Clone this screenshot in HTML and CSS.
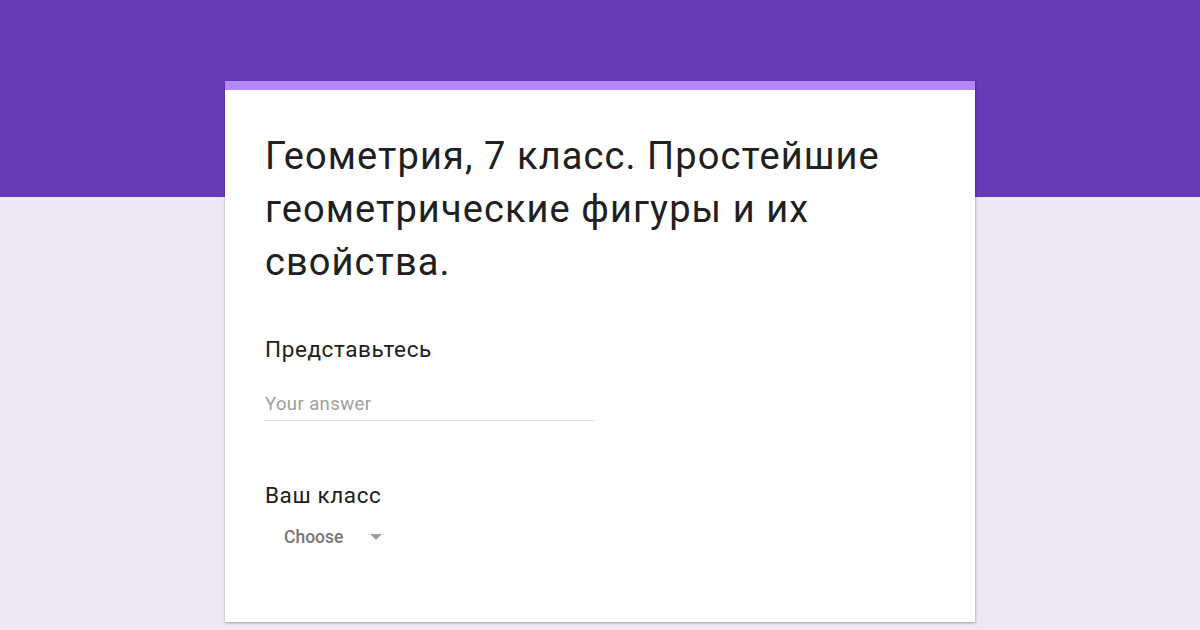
FILE: index.html
```html
<!DOCTYPE html>
<html>
<head>
<meta charset="utf-8">
<link rel="stylesheet" href="styles.css">
</head>
<body>
<div class="page">
  <div class="band"></div>
  <div class="card">
    <div class="stripe"></div>
    <div class="content">
      <h1 class="title">Геометрия, 7 класс. Простейшие геометрические фигуры и их свойства.</h1>
      <div class="question">
        <div class="label">Представьтесь</div>
        <div class="input">Your answer</div>
      </div>
      <div class="question q2">
        <div class="label">Ваш класс</div>
        <div class="select"><span class="choose">Choose</span><span class="arrow"></span></div>
      </div>
    </div>
  </div>
</div>
</body>
</html>
```
FILE: styles.css
```css
html, body {
  margin: 0;
  padding: 0;
}
body {
  background: #ede7f6;
  font-family: Roboto, "Noto Sans", sans-serif;
  width: 1200px;
  height: 630px;
  overflow: hidden;
}
.page {
  position: relative;
  height: 630px;
}
.band {
  height: 197px;
  background: #673ab7;
}
.card {
  position: absolute;
  left: 225px;
  top: 81px;
  width: 750px;
  height: 541px;
  background: #fff;
  box-shadow: 0 1px 2px rgba(0,0,0,0.25), 1px 1px 3px rgba(0,0,0,0.12);
}
.stripe {
  height: 9px;
  background: #b388ff;
}
.content {
  padding: 40px 40px 0 40px;
}
.title {
  margin: 0;
  font-weight: 400;
  font-size: 38px;
  letter-spacing: 1.1px;
  line-height: 53px;
  color: #202020;
  width: 660px;
}
.question {
  margin-top: 46px;
}
.label {
  font-size: 22.5px;
  letter-spacing: 0.6px;
  line-height: 28px;
  color: #202020;
}
.input {
  margin-top: 29px;
  width: 330px;
  font-size: 18.5px;
  letter-spacing: 0.4px;
  line-height: 24px;
  color: #9e9e9e;
  padding-bottom: 4px;
  border-bottom: 1px solid #e0e0e0;
}
.q2 {
  margin-top: 60px;
}
.select {
  display: flex;
  align-items: center;
  margin-top: 16px;
  padding-left: 19px;
  line-height: 24px;
}
.choose {
  font-size: 17.5px;
  font-weight: 500;
  color: #757575;
}
.arrow {
  margin-left: 27px;
  width: 0;
  height: 0;
  border-left: 6px solid transparent;
  border-right: 6px solid transparent;
  border-top: 6px solid #9e9e9e;
}
```
